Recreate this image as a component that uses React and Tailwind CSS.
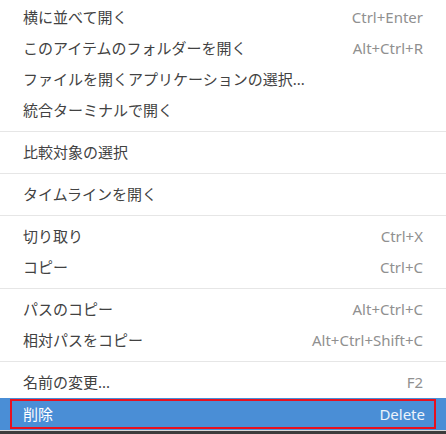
import React from 'react';

const sections = [
    [
        { label: '横に並べて開く', key: 'Ctrl+Enter' },
        { label: 'このアイテムのフォルダーを開く', key: 'Alt+Ctrl+R' },
        { label: 'ファイルを開くアプリケーションの選択...' },
        { label: '統合ターミナルで開く' },
    ],
    [{ label: '比較対象の選択' }],
    [{ label: 'タイムラインを開く' }],
    [
        { label: '切り取り', key: 'Ctrl+X' },
        { label: 'コピー', key: 'Ctrl+C' },
    ],
    [
        { label: 'パスのコピー', key: 'Alt+Ctrl+C' },
        { label: '相対パスをコピー', key: 'Alt+Ctrl+Shift+C' },
    ],
    [
        { label: '名前の変更...', key: 'F2' },
        { label: '削除', key: 'Delete', active: true },
    ],
];

function Item({ label, shortcut, active }) {
    if (active) {
        return (
            <div className="h-[32px] bg-[#4a8ed6] flex items-center">
                <div className="mx-[10px] flex-1 h-[30px] border-2 border-[#e8101e] flex items-center justify-between pl-[11px] pr-[9px] text-white">
                    <span>{label}</span>
                    <span className="text-white/90">{shortcut}</span>
                </div>
            </div>
        );
    }
    return (
        <div className="h-[31px] px-[23px] flex items-center justify-between">
            <span className="text-[#424242]">{label}</span>
            {shortcut && <span className="text-[#909090]">{shortcut}</span>}
        </div>
    );
}

export default function App() {
    return (
        <div
            className="w-[446px] h-[434px] bg-white overflow-hidden text-[15px] pt-[2px]"
            style={{ fontFamily: '"Noto Sans", "Noto Sans CJK JP", sans-serif' }}
        >
            {sections.map((items, i) => (
                <div key={i}>
                    {i > 0 && <div className="my-[5px] h-px bg-[#e6e6e6]" />}
                    {items.map((item) => (
                        <Item key={item.label} label={item.label} shortcut={item.key} active={item.active} />
                    ))}
                </div>
            ))}
            <div className="h-px bg-[#d8d8d8]" />
            <div className="h-[3px] bg-[#3c3c3c]" />
        </div>
    );
}
